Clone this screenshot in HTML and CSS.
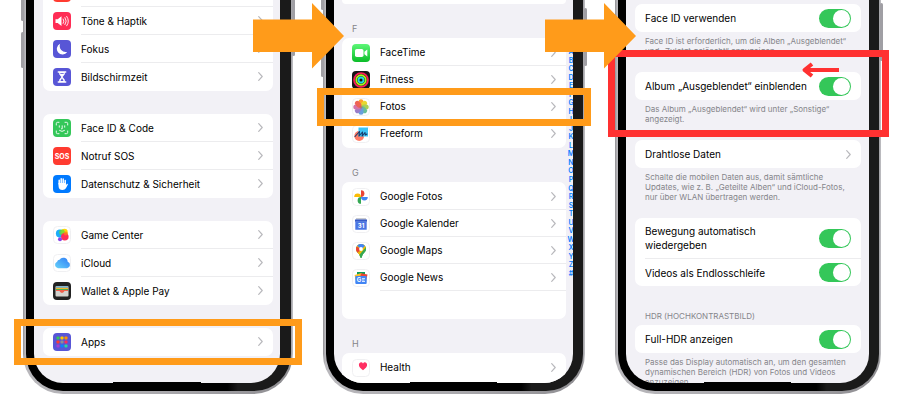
FILE: index.html
```html
<!DOCTYPE html>
<html lang="de">
<head>
<meta charset="utf-8">
<title>Album „Ausgeblendet“ einblenden</title>
<link rel="stylesheet" href="styles.css">
</head>
<body>
<svg class="defs" aria-hidden="true">
  <defs>
    <symbol id="chevron" viewBox="0 0 5 9"><path d="M.7.7 4.2 4.5.7 8.3" fill="none" stroke="#b9b9bd" stroke-width="1.2" stroke-linecap="round" stroke-linejoin="round"/></symbol>
    <symbol id="step-arrow" viewBox="0 0 91 66"><path d="M0 16.5h59V0l32 33-32 32.500V49H0z" fill="#ff9b1a"/></symbol>
  </defs>
</svg>

<main class="stage">
  <section class="phone phone--settings">
    <i class="key key--left key--a"></i><i class="key key--left key--b"></i><i class="key key--right key--c"></i>
    <div class="bezel"><div class="screen">
      <div class="list">
        <nav class="card">
          <a class="row" href="#"><svg class="icon" viewBox="0 0 18 18"><rect width="18" height="18" rx="4" fill="#ff3b30"/></svg><span class="cell">Mitteilungen<svg class="chevron"><use href="#chevron"/></svg></span></a>
          <a class="row" href="#"><svg class="icon" viewBox="0 0 18 18"><rect width="18" height="18" rx="4" fill="#ff2d55"/><path d="M2.500 7.300h2.200L8.500 4.300v9.600L4.700 11H2.500z" fill="#fff"/><path d="M10.200 7q1.500 2.200 0 4.400M12 5.600q2.600 3.500 0 7M13.700 4.400q3.400 4.700 0 9.400" fill="none" stroke="#fff" stroke-width=".9" stroke-linecap="round"/></svg><span class="cell">Töne &amp; Haptik<svg class="chevron"><use href="#chevron"/></svg></span></a>
          <a class="row" href="#"><svg class="icon" viewBox="0 0 18 18"><rect width="18" height="18" rx="4" fill="#5856d6"/><path d="M7.200 3.800a5.600 5.600 0 1 0 7 8.100A6 6 0 0 1 7.200 3.800z" fill="#fff"/></svg><span class="cell">Fokus<svg class="chevron"><use href="#chevron"/></svg></span></a>
          <a class="row" href="#"><svg class="icon" viewBox="0 0 18 18"><rect width="18" height="18" rx="4" fill="#5856d6"/><path d="M5.300 3.900h7.400M5.300 14.100h7.400" stroke="#fff" stroke-width="1.500" stroke-linecap="round"/><path d="M6.200 4v2.200L8.400 9l-2.200 2.800V14h5.600v-2.200L9.600 9l2.200-2.800V4z" fill="#fff"/><path d="M9 10.300 7.400 13h3.200z" fill="#5856d6"/><path d="M7.300 5.500h3.400" stroke="#5856d6" stroke-width=".8"/></svg><span class="cell">Bildschirmzeit<svg class="chevron"><use href="#chevron"/></svg></span></a>
        </nav>
        <nav class="card">
          <a class="row" href="#"><svg class="icon" viewBox="0 0 18 18"><rect width="18" height="18" rx="4" fill="#34c759"/><path d="M3.300 6V4.600q0-1.300 1.300-1.300H6M12 3.300h1.400q1.300 0 1.300 1.300V6M14.700 12v1.400q0 1.300-1.300 1.300H12M6 14.700H4.600q-1.300 0-1.300-1.300V12M6.300 6.800v1.400M11.700 6.800v1.400M9.200 6.800v3H8.500M6.500 11.500q2.500 2 5 0" fill="none" stroke="#fff" stroke-width=".9" stroke-linecap="round"/></svg><span class="cell">Face ID &amp; Code<svg class="chevron"><use href="#chevron"/></svg></span></a>
          <a class="row" href="#"><svg class="icon" viewBox="0 0 18 18"><rect width="18" height="18" rx="4" fill="#ff3b30"/><text x="9" y="11.600" class="glyph glyph--sos">SOS</text></svg><span class="cell">Notruf SOS<svg class="chevron"><use href="#chevron"/></svg></span></a>
          <a class="row" href="#"><svg class="icon" viewBox="0 0 18 18"><rect width="18" height="18" rx="4" fill="#007aff"/><path d="M6.200 9V5.200M8.200 8.500V3.800M10.200 8.500V4M12.200 9.200V5.500" stroke="#fff" stroke-width="1.500" stroke-linecap="round"/><path d="M5.500 8h7.400v2.300l1-1.500q1.200-.3 1 .8l-2 3.600q-1 1.700-3.400 1.700-4 0-4-4.200z" fill="#fff"/></svg><span class="cell">Datenschutz &amp; Sicherheit<svg class="chevron"><use href="#chevron"/></svg></span></a>
        </nav>
        <nav class="card">
          <a class="row" href="#"><svg class="icon" viewBox="0 0 18 18"><rect x=".5" y=".5" width="17" height="17" rx="4" fill="#fff" stroke="#f0f0f2"/><circle cx="6.800" cy="7.500" r="3.900" fill="#1badf8"/><circle cx="11.500" cy="6" r="3.200" fill="#ffd60a"/><circle cx="9" cy="6.200" r="2.800" fill="#63da38" opacity=".8"/><circle cx="11.800" cy="10.800" r="3.800" fill="#ff2d55"/><circle cx="7" cy="13.300" r="2" fill="#8944e8"/><circle cx="12.800" cy="7.500" r="2" fill="#ff7a1a" opacity=".8"/></svg><span class="cell">Game Center<svg class="chevron"><use href="#chevron"/></svg></span></a>
          <a class="row" href="#"><svg class="icon" viewBox="0 0 18 18"><defs><linearGradient id="cloud" x1="0" y1="1" x2="1" y2="0"><stop stop-color="#66d3fa"/><stop offset="1" stop-color="#2f7cf6"/></linearGradient></defs><rect x=".5" y=".5" width="17" height="17" rx="4" fill="#fff" stroke="#f0f0f2"/><path d="M5 14.200a3.400 3.400 0 0 1-.9-6.500A2.600 2.600 0 0 1 6.500 5.700a4.500 4.500 0 0 1 8.200 2.100 3.300 3.300 0 0 1-.6 6.400z" fill="url(#cloud)"/></svg><span class="cell">iCloud<svg class="chevron"><use href="#chevron"/></svg></span></a>
          <a class="row" href="#"><svg class="icon" viewBox="0 0 18 18"><rect width="18" height="18" rx="4" fill="#222"/><rect x="2.500" y="4" width="13" height="10.500" rx="1" fill="#d4d3cf"/><path d="M3 4.500h12v1.300H3z" fill="#3f9ed4"/><path d="M3 5.800h12v1.300H3z" fill="#f7b42c"/><path d="M3 7.100h12v1H3z" fill="#4cae50"/><path d="M3 8.100h12v1h-3.500q-.6 1.800-2.500 1.800T6.500 9.100H3z" fill="#f0604d"/></svg><span class="cell">Wallet &amp; Apple Pay<svg class="chevron"><use href="#chevron"/></svg></span></a>
        </nav>
        <nav class="card">
          <a class="row" href="#"><svg class="icon" viewBox="0 0 18 18"><rect width="18" height="18" rx="4" fill="#5856d6"/><g><rect x="3.500" y="3.500" width="3" height="3" rx=".8" fill="#34c759"/><rect x="7.500" y="3.500" width="3" height="3" rx=".8" fill="#ffcc00"/><rect x="11.500" y="3.500" width="3" height="3" rx=".8" fill="#ff9500"/><rect x="3.500" y="7.500" width="3" height="3" rx=".8" fill="#ff3b30"/><rect x="7.500" y="7.500" width="3" height="3" rx=".8" fill="#8e8e93"/><rect x="11.500" y="7.500" width="3" height="3" rx=".8" fill="#ff2d55"/><rect x="3.500" y="11.500" width="3" height="3" rx=".8" fill="#a63fd0"/><rect x="7.500" y="11.500" width="3" height="3" rx=".8" fill="#0a84ff"/><rect x="11.500" y="11.500" width="3" height="3" rx=".8" fill="#2bd4a0"/></g></svg><span class="cell">Apps<svg class="chevron"><use href="#chevron"/></svg></span></a>
        </nav>
      </div>
    </div></div>
    <div class="highlight"></div>
    <svg class="step-arrow"><use href="#step-arrow"/></svg>
  </section>

  <section class="phone phone--apps">
    <i class="key key--left key--a"></i><i class="key key--left key--b"></i><i class="key key--right key--c"></i>
    <div class="bezel"><div class="screen">
      <div class="list">
        <div class="card card--tail"></div>
        <h2 class="letter">F</h2>
        <nav class="card">
          <a class="row" href="#"><svg class="icon" viewBox="0 0 18 18"><defs><linearGradient id="ft" x1="0" y1="0" x2="0" y2="1"><stop stop-color="#5df777"/><stop offset="1" stop-color="#0bbc29"/></linearGradient></defs><rect width="18" height="18" rx="4" fill="url(#ft)"/><rect x="3" y="5" width="8.500" height="8" rx="1.800" fill="#fff"/><path d="M12.400 7.800 15.300 5.500v7l-2.900-2.300z" fill="#fff"/></svg><span class="cell">FaceTime<svg class="chevron"><use href="#chevron"/></svg></span></a>
          <a class="row" href="#"><svg class="icon" viewBox="0 0 18 18"><rect width="18" height="18" rx="4" fill="#151515"/><g fill="none" stroke-width="1.900"><circle cx="9" cy="9" r="6.900" stroke="#fa1e57"/><circle cx="9" cy="9" r="4.700" stroke="#a5f817"/><circle cx="9" cy="9" r="2.500" stroke="#20dbe0"/></g></svg><span class="cell">Fitness<svg class="chevron"><use href="#chevron"/></svg></span></a>
          <a class="row" href="#"><svg class="icon" viewBox="0 0 18 18"><rect x=".5" y=".5" width="17" height="17" rx="4" fill="#fff" stroke="#f0f0f2"/><g opacity=".9"><rect x="6.500" y="1.300" width="5" height="7.400" rx="2.500" fill="#ff9a18"/><rect x="6.500" y="1.300" width="5" height="7.400" rx="2.500" fill="#e6d319" transform="rotate(45 9 9)"/><rect x="6.500" y="1.300" width="5" height="7.400" rx="2.500" fill="#a4cc43" transform="rotate(90 9 9)"/><rect x="6.500" y="1.300" width="5" height="7.400" rx="2.500" fill="#57b98c" transform="rotate(135 9 9)"/><rect x="6.500" y="1.300" width="5" height="7.400" rx="2.500" fill="#5a95d8" transform="rotate(180 9 9)"/><rect x="6.500" y="1.300" width="5" height="7.400" rx="2.500" fill="#8e6fc4" transform="rotate(225 9 9)"/><rect x="6.500" y="1.300" width="5" height="7.400" rx="2.500" fill="#d1659f" transform="rotate(270 9 9)"/><rect x="6.500" y="1.300" width="5" height="7.400" rx="2.500" fill="#ee5342" transform="rotate(315 9 9)"/><circle cx="9" cy="9" r="1.500" fill="#b5503c" opacity=".6"/></g></svg><span class="cell">Fotos<svg class="chevron"><use href="#chevron"/></svg></span></a>
          <a class="row" href="#"><svg class="icon" viewBox="0 0 18 18"><rect x=".5" y=".5" width="17" height="17" rx="4" fill="#fff" stroke="#f0f0f2"/><circle cx="7.200" cy="11" r="4.900" fill="#ff7b66"/><path d="M6.500 2.500H16v9H6.500z" fill="#3cc3f4"/><path d="M3 11.500 7.500 6.500 7 11l3.500-4-.3 4L13 7.500l.3 2.500L15 9" fill="none" stroke="#173a6b" stroke-width="1.100" stroke-linejoin="round" stroke-linecap="round"/></svg><span class="cell">Freeform<svg class="chevron"><use href="#chevron"/></svg></span></a>
        </nav>
        <h2 class="letter">G</h2>
        <nav class="card">
          <a class="row" href="#"><svg class="icon" viewBox="0 0 18 18"><rect x=".5" y=".5" width="17" height="17" rx="4" fill="#fff" stroke="#f0f0f2"/><path d="M9 9V2.200a3.400 3.400 0 0 1 0 6.800z" fill="#ea4335"/><path d="M9 9h6.800a3.400 3.400 0 0 1-6.800 0z" fill="#4285f4"/><path d="M9 9v6.800A3.400 3.400 0 0 1 9 9z" fill="#34a853"/><path d="M9 9H2.200A3.400 3.400 0 0 1 9 9z" fill="#fbbc04"/></svg><span class="cell">Google Fotos<svg class="chevron"><use href="#chevron"/></svg></span></a>
          <a class="row" href="#"><svg class="icon" viewBox="0 0 18 18"><rect x=".5" y=".5" width="17" height="17" rx="4" fill="#fff" stroke="#f0f0f2"/><path d="M4 3h10v2H4z" fill="#c9cbd0"/><path d="M3 4.500h12v2.300H3z" fill="#3458c5"/><path d="M3.300 6.500h11.400v8.300H3.300z" fill="#4a76e4"/><text x="9" y="12.600" class="glyph glyph--day">31</text></svg><span class="cell">Google Kalender<svg class="chevron"><use href="#chevron"/></svg></span></a>
          <a class="row" href="#"><svg class="icon" viewBox="0 0 18 18"><defs><clipPath id="pin"><path d="M9 2a5 5 0 0 1 5 5c0 3.200-3.600 4.400-4.200 8.200-.2 1-1.400 1-1.600 0C7.600 11.400 4 10.200 4 7a5 5 0 0 1 5-5z"/></clipPath></defs><rect x=".5" y=".5" width="17" height="17" rx="4" fill="#fff" stroke="#f0f0f2"/><g clip-path="url(#pin)"><path d="M2 0h14v18H2z" fill="#34a853"/><path d="M2 0h14v3L9 7 6 13 2 12z" fill="#fbbc04"/><path d="M2 3 9 7 4.500 12.200 2 10z" fill="#ea4335"/><path d="M9 7 4.800 3.600 7 1h9v1.500z" fill="#4285f4"/><path d="M6 11.700 13 3.800l3 2L7.500 14z" fill="#fbbc04"/><path d="M7 13.200 14.500 4.500 18 9l-8 9z" fill="#34a853"/></g><circle cx="9" cy="7" r="1.900" fill="#fff"/></svg><span class="cell">Google Maps<svg class="chevron"><use href="#chevron"/></svg></span></a>
          <a class="row" href="#"><svg class="icon" viewBox="0 0 18 18"><rect x=".5" y=".5" width="17" height="17" rx="4" fill="#fff" stroke="#f0f0f2"/><path d="M5 3h8v5H5z" fill="#0c9d58"/><path d="m2.600 6 7-2 1 5-7 2z" fill="#fbc02d"/><path d="m9 4.300 6.500 1.300-1.300 6L8 9z" fill="#ea4335"/><rect x="3.300" y="7" width="11.400" height="8" rx="1" fill="#4285f4"/><text x="7" y="13" class="glyph glyph--news">G</text><path d="M10 9.600h3M10 11h2.500M10 12.500h3" stroke="#fff" stroke-width=".8"/></svg><span class="cell">Google News<svg class="chevron"><use href="#chevron"/></svg></span></a>
          <div class="row"></div>
        </nav>
        <h2 class="letter">H</h2>
        <nav class="card card--open">
          <a class="row" href="#"><svg class="icon" viewBox="0 0 18 18"><rect x=".5" y=".5" width="17" height="17" rx="4" fill="#fff" stroke="#f0f0f2"/><path d="M11 11.300C8.300 9.200 6.900 7.600 6.900 5.700c0-2.500 3-3.300 4.100-1.300 1.100-2 4.100-1.200 4.100 1.300 0 1.900-1.400 3.500-4.100 5.600z" fill="#ff2f63"/></svg><span class="cell">Health<svg class="chevron"><use href="#chevron"/></svg></span></a>
        </nav>
      </div>
      <ol class="index"><li>A</li><li>B</li><li>C</li><li>D</li><li>E</li><li>F</li><li>G</li><li>H</li><li>I</li><li>J</li><li>K</li><li>L</li><li>M</li><li>N</li><li>O</li><li>P</li><li>Q</li><li>R</li><li>S</li><li>T</li><li>U</li><li>V</li><li>W</li><li>X</li><li>Y</li><li>Z</li><li>#</li></ol>
    </div></div>
    <div class="highlight"></div>
    <svg class="step-arrow"><use href="#step-arrow"/></svg>
  </section>

  <section class="phone phone--photos">
    <i class="key key--left key--b"></i><i class="key key--right key--c"></i>
    <div class="bezel"><div class="screen">
      <div class="list">
        <div class="card">
          <label class="option"><span>Face ID verwenden</span><input class="switch" type="checkbox" checked></label>
        </div>
        <p class="note">Face ID ist erforderlich, um die Alben „Ausgeblendet“ und „Zuletzt gelöscht“ anzuzeigen.</p>
        <div class="card">
          <label class="option"><span>Album „Ausgeblendet“ einblenden</span><input class="switch" type="checkbox" checked></label>
        </div>
        <p class="note">Das Album „Ausgeblendet“ wird unter „Sonstige“ angezeigt.</p>
        <div class="card">
          <a class="option" href="#"><span>Drahtlose Daten</span><svg class="chevron"><use href="#chevron"/></svg></a>
        </div>
        <p class="note note--long">Schalte die mobilen Daten aus, damit sämtliche Updates, wie z. B. „Geteilte Alben“ und iCloud-Fotos, nur über WLAN übertragen werden.</p>
        <div class="card">
          <label class="option option--two"><span>Bewegung automatisch wiedergeben</span><input class="switch" type="checkbox" checked></label>
          <label class="option"><span>Videos als Endlosschleife</span><input class="switch" type="checkbox" checked></label>
        </div>
        <h2 class="heading">HDR (HOCHKONTRASTBILD)</h2>
        <div class="card">
          <label class="option"><span>Full-HDR anzeigen</span><input class="switch" type="checkbox" checked></label>
        </div>
        <p class="note">Passe das Display automatisch an, um den gesamten dynamischen Bereich (HDR) von Fotos und Videos anzuzeigen.</p>
      </div>
    </div></div>
    <div class="highlight highlight--red"></div>
    <svg class="pointer" viewBox="0 0 38 16"><path d="M38 8H4M11 2 3.500 8l7.500 6" fill="none" stroke="#ff3131" stroke-width="4" stroke-linejoin="round"/></svg>
  </section>
</main>
</body>
</html>
```
FILE: styles.css
```css
* { box-sizing: border-box; }

body {
  margin: 0;
  background: #fff;
  color: #000;
  font: 10px/14px Inter, "Liberation Sans", sans-serif;
}

a { color: inherit; text-decoration: none; }
h2, p, ol { margin: 0; padding: 0; font-weight: 400; }
.defs { position: absolute; width: 0; height: 0; }

.stage {
  display: flex;
  gap: 30px;
  height: 100vh;
  padding: 0 19px 6px 23px;
  overflow: hidden;
}

/* Phone body */
.phone {
  position: relative;
  display: flex;
  min-width: 0;
  padding: 0 2px 3px 3px;
  border-radius: 0 0 40px 40px;
  background: linear-gradient(to right, #8f8e92, #b9b8bc 2px, #aaa9ad 50%, #8f8e92 99%, #c4c4c8);
}
.phone--settings { flex: 270 1 0; }
.phone--apps { flex: 262 1 0; }
.phone--photos { flex: 266 1 0; }

.bezel {
  display: flex;
  flex: 1;
  min-width: 0;
  padding: 0 11px 8px 8px;
  border-radius: 0 0 37px 37px;
  background: linear-gradient(to right, #000 76%, #1a1a1a 80%);
}
.phone--apps .bezel, .phone--photos .bezel { padding-right: 10px; }

.screen {
  position: relative;
  display: flex;
  flex: 1;
  min-width: 0;
  overflow: hidden;
  border-radius: 0 0 29px 29px;
  background: #f2f1f6;
}
.screen::after {
  content: "";
  position: absolute;
  right: 32%;
  bottom: 0;
  left: 32%;
  height: 1px;
  background: #000;
}

.key {
  position: absolute;
  width: 3px;
  border-radius: 2px;
  background: #a09fa4;
}
.key--left { left: -2px; }
.key--right { right: -2px; }
.phone--settings .key--a { top: -10px; height: 31px; }
.phone--settings .key--b { top: 32px; height: 36px; }
.phone--settings .key--c { top: -4px; height: 60px; }
.phone--apps .key--a { top: -10px; height: 20px; }
.phone--apps .key--b { top: 40px; height: 37px; }
.phone--apps .key--c { top: 8px; height: 58px; }
.phone--photos .key--b { top: 36px; height: 36px; }
.phone--photos .key--c { top: 3px; height: 58px; }

/* Grouped lists */
.list { flex: 1; min-width: 0; padding: 0 7px 0 9px; }
.phone--settings .list { margin-top: -21px; }
.phone--apps .list { padding: 0 0 0 8px; }
.phone--photos .list { padding: 4px 8px 0 9px; }

.card {
  overflow: hidden;
  border-radius: 7px;
  background: #fff;
}
.phone--settings .card + .card { margin-top: 23px; }
.phone--apps .card { padding: 1px 0; }
.card--tail { height: 4px; border-radius: 0 0 7px 7px; }
.card--open { min-height: 60px; }

.row {
  display: flex;
  align-items: center;
  gap: 10px;
  height: 28px;
  padding-left: 10px;
}
.phone--apps .row { height: 27px; }

.icon { flex: none; width: 18px; height: 18px; }

.cell {
  display: flex;
  flex: 1;
  align-items: center;
  justify-content: space-between;
  align-self: stretch;
  padding-right: 10px;
  border-bottom: 1px solid #ececee;
}
.row:last-child .cell { border-bottom-color: transparent; }

.chevron { flex: none; width: 5px; height: 9px; }

.glyph { fill: #fff; font-weight: 700; text-anchor: middle; }
.glyph--sos { font-size: 7px; }
.glyph--day { font-size: 6px; }
.glyph--news { font-size: 6px; }

.letter {
  padding: 18px 0 2px 10px;
  color: #85858a;
  font-size: 9px;
}

.index {
  display: flex;
  flex-direction: column;
  justify-content: space-between;
  align-items: center;
  align-self: flex-start;
  width: 7px;
  height: 230px;
  margin-top: 48px;
  color: #087cff;
  font-size: 7px;
  font-weight: 600;
  line-height: 8px;
  list-style: none;
}
.index li { padding-left: 3px; }

/* Options with switches */
.option {
  display: flex;
  align-items: center;
  justify-content: space-between;
  min-height: 28px;
  padding-right: 10px;
  margin-left: 10px;
}
.option + .option { border-top: 1px solid #ececee; }
.option--two { min-height: 40px; }
.option--two span { width: 130px; }

.switch {
  appearance: none;
  flex: none;
  width: 32px;
  height: 19px;
  margin: 0;
  padding: 1px;
  border-radius: 10px;
  background: #34c759;
}
.switch::before {
  content: "";
  display: block;
  width: 17px;
  height: 17px;
  margin-left: auto;
  border-radius: 50%;
  background: #fff;
}

.note {
  min-height: 40px;
  padding: 4px 10px 0;
  color: #85858a;
  font-size: 8px;
  line-height: 10px;
}
.note--long { min-height: 50px; }

.heading {
  padding: 23px 0 2px 10px;
  color: #85858a;
  font-size: 8px;
}

/* Annotations over the phones */
.highlight {
  position: absolute;
  border: 7px solid #ff9b1a;
}
.phone--settings .highlight { top: 319px; right: -9px; left: -9px; height: 46px; }
.phone--apps .highlight { top: 88px; right: -6px; left: -6px; height: 38px; }
.phone--photos .highlight { top: 50px; right: -8px; left: -7px; height: 87px; }
.phone--photos .highlight--red { border-color: #ff3131; }

.step-arrow {
  position: absolute;
  z-index: 2;
  top: 3px;
  right: -51px;
  width: 91px;
  height: 66px;
}

.pointer {
  position: absolute;
  top: 62px;
  right: 42px;
  width: 38px;
  height: 16px;
}
```
